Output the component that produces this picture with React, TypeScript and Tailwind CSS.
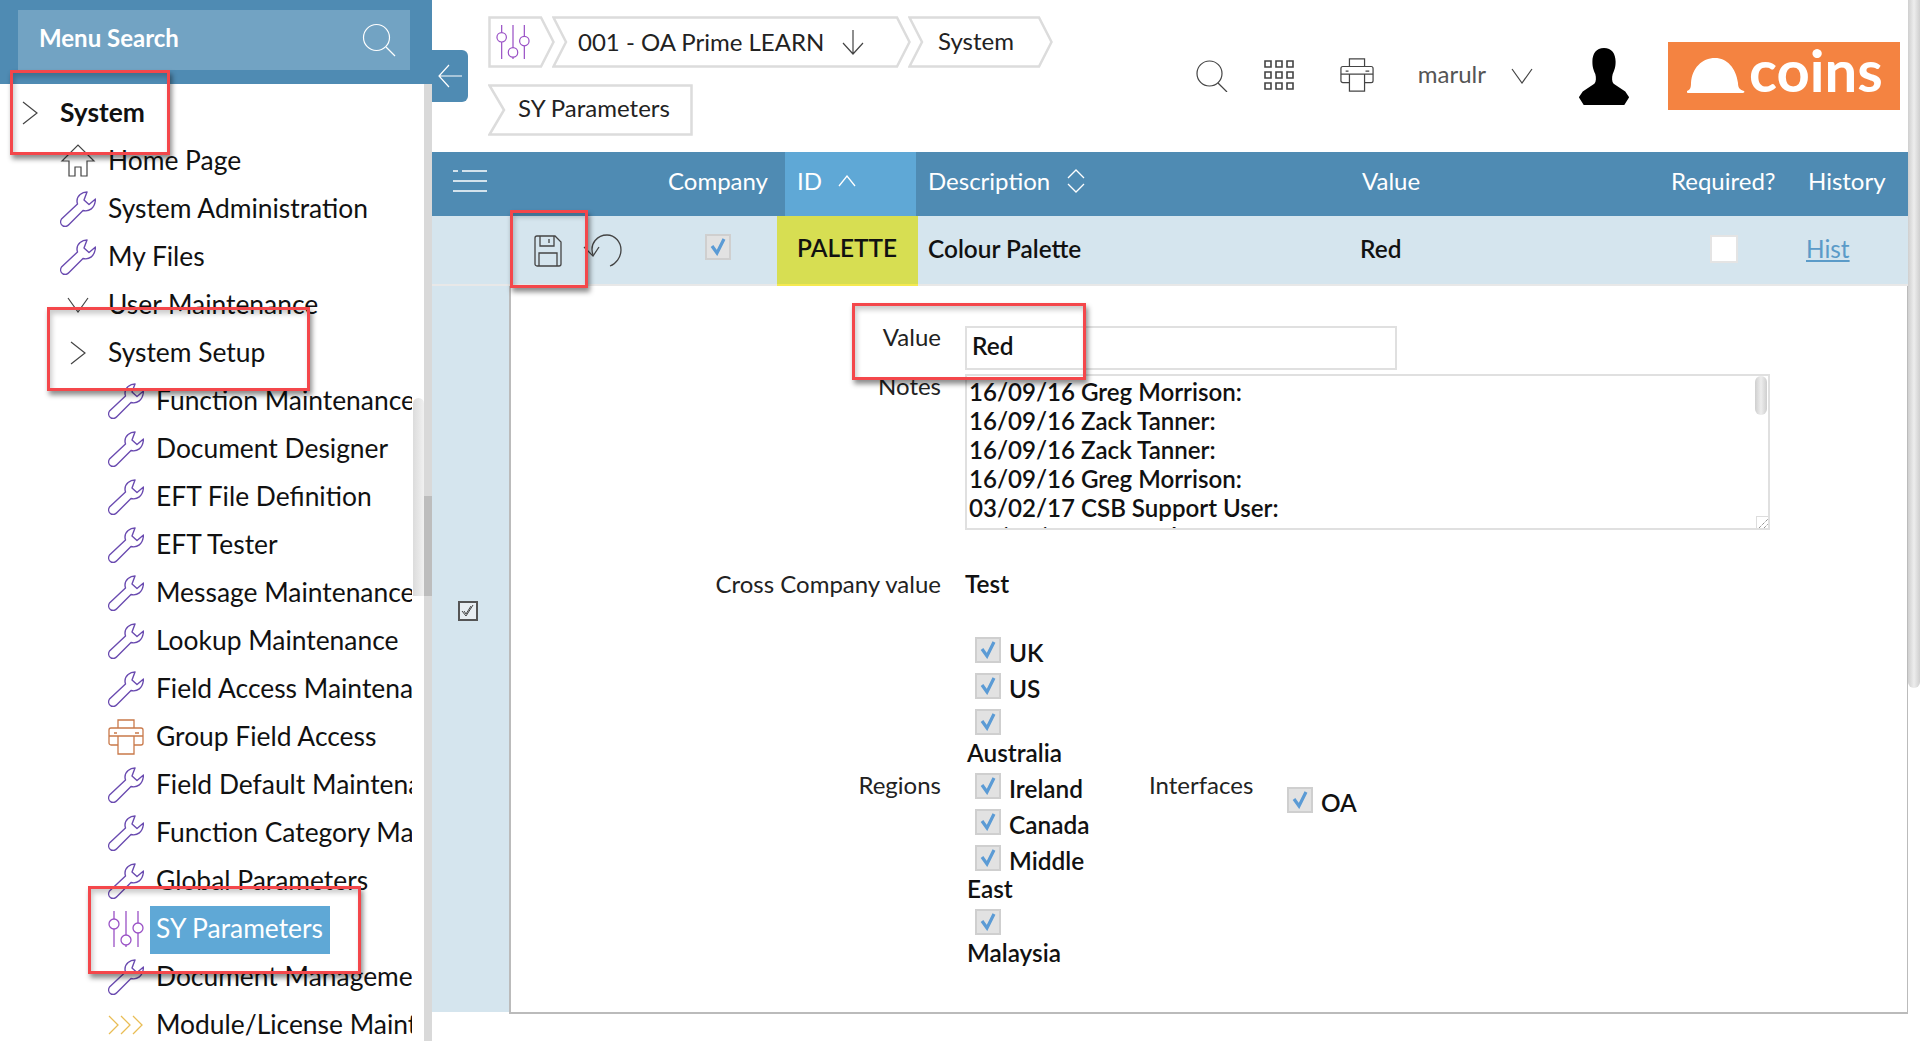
import React from "react";

const Wrench = () => (
  <svg width="36" height="36" viewBox="0 0 36 36" fill="none" stroke="#6a4bb0" strokeWidth="1.4" strokeLinejoin="round" className="shrink-0">
    <path d="M27 1C22 1 17 4.500 17 10c0 1 .2 2 .5 3L1.500 28c-1.500 2.500-1 5.500 1.500 7 2 .8 4.500 .3 6-1.500L23 19.500c6 1.500 12-2 12.500-11.500L29 13.500l-5-4.500z" />
  </svg>
);
const Sliders = ({ s = 36 }: { s?: number }) => (
  <svg width={s} height={s} viewBox="0 0 36 36" fill="none" stroke="#9a52c6" strokeWidth="1.3" className="shrink-0">
    <path d="M6 0v8M6 18v18M18 0v24M18 34v2M30 0v12M30 22v14" />
    <circle cx="6" cy="13" r="5" /><circle cx="18" cy="29" r="5" /><circle cx="30" cy="17" r="5" />
  </svg>
);
const Home = () => (
  <svg width="36" height="36" viewBox="0 0 36 36" fill="none" stroke="#444" strokeWidth="1.2" className="shrink-0">
    <path d="M2 18 18 2l16 16h-7v15h-6v-9h-6v9H9V18z" />
  </svg>
);
const Printer = ({ c, s = 36 }: { c: string; s?: number }) => (
  <svg width={s} height={s} viewBox="0 0 36 36" fill="none" stroke={c} strokeWidth="1.3" className="shrink-0">
    <path d="M10 9V1h16v8M10 26H3a2 2 0 0 1-2-2V11a2 2 0 0 1 2-2h30a2 2 0 0 1 2 2v13a2 2 0 0 1-2 2h-7" />
    <path d="M10 17h16v18H10zM6 14h3M27 14h4M1 17h9M26 17h9" />
  </svg>
);
const ChevR = () => (
  <svg width="16" height="24" viewBox="0 0 16 24" fill="none" stroke="#444" strokeWidth="1.2" className="shrink-0"><path d="M1 1l14 11L1 23" /></svg>
);
const ChevD = ({ w = 22, h = 16 }: { w?: number; h?: number }) => (
  <svg width={w} height={h} viewBox="0 0 22 16" fill="none" stroke="#444" strokeWidth="1.2" className="shrink-0"><path d="M1 1l10 14L21 1" /></svg>
);
const Triple = () => (
  <svg width="36" height="20" viewBox="0 0 36 20" fill="none" stroke="#e9bd55" strokeWidth="1.3" className="shrink-0"><path d="M1 1l9 9-9 9M13 1l9 9-9 9M25 1l9 9-9 9" /></svg>
);

type Item = { t: string; lvl: number; icon: React.ReactNode; bold?: boolean; sel?: boolean };
const items: Item[] = [
  { t: "System", lvl: 0, icon: <ChevR />, bold: true },
  { t: "Home Page", lvl: 1, icon: <Home /> },
  { t: "System Administration", lvl: 1, icon: <Wrench /> },
  { t: "My Files", lvl: 1, icon: <Wrench /> },
  { t: "User Maintenance", lvl: 1, icon: <ChevD /> },
  { t: "System Setup", lvl: 1, icon: <ChevR /> },
  { t: "Function Maintenance", lvl: 2, icon: <Wrench /> },
  { t: "Document Designer", lvl: 2, icon: <Wrench /> },
  { t: "EFT File Definition", lvl: 2, icon: <Wrench /> },
  { t: "EFT Tester", lvl: 2, icon: <Wrench /> },
  { t: "Message Maintenance", lvl: 2, icon: <Wrench /> },
  { t: "Lookup Maintenance", lvl: 2, icon: <Wrench /> },
  { t: "Field Access Maintenance", lvl: 2, icon: <Wrench /> },
  { t: "Group Field Access", lvl: 2, icon: <Printer c="#c9794a" /> },
  { t: "Field Default Maintenance", lvl: 2, icon: <Wrench /> },
  { t: "Function Category Maintenance", lvl: 2, icon: <Wrench /> },
  { t: "Global Parameters", lvl: 2, icon: <Wrench /> },
  { t: "SY Parameters", lvl: 2, icon: <Sliders />, sel: true },
  { t: "Document Management", lvl: 2, icon: <Wrench /> },
  { t: "Module/License Maintenance", lvl: 2, icon: <Triple /> },
];

const MenuRow = ({ it }: { it: Item }) => (
  <div className={`flex h-12 shrink-0 items-center ${it.lvl === 0 ? "pl-3" : it.lvl === 1 ? "pl-[60px]" : "pl-[108px]"}`}>
    <div className="flex w-9 shrink-0 justify-center">{it.icon}</div>
    {it.sel ? (
      <span className="ml-[6px] mt-px flex h-12 items-center bg-[#5fa8d6] pb-[2px] pl-[6px] pr-[7px] text-white">{it.t}</span>
    ) : (
      <span className={it.bold ? "ml-3 font-bold text-[#111]" : "ml-3 text-[#111]"}>{it.t}</span>
    )}
  </div>
);

const RedBox = ({ c }: { c: string }) => (
  <div className={`pointer-events-none absolute border-[3px] border-[#f4474b] shadow-[2px_4px_5px_rgba(0,0,0,0.45),inset_2px_4px_5px_rgba(0,0,0,0.2)] ${c}`} />
);

const Crumb = ({ w, kind, children }: { w: number; kind: "first" | "mid" | "last"; children: React.ReactNode }) => {
  const d =
    kind === "first"
      ? `M1.5 1.5H${w - 14}L${w - 1.5} 26L${w - 14} 50.5H1.5Z`
      : kind === "mid"
        ? `M1.5 1.5H${w - 14}L${w - 1.5} 26L${w - 14} 50.5H1.5L14 26Z`
        : `M1.5 1.5H${w - 1.5}V50.5H1.5L16 26Z`;
  return (
    <div className="relative flex h-[52px] shrink-0 items-center" style={{ width: w }}>
      <svg width={w} height={52} className="absolute left-0 top-0" fill="none" stroke="#dcdcdc" strokeWidth="2.5"><path d={d} /></svg>
      <div className="relative flex items-center">{children}</div>
    </div>
  );
};

const Check = ({ c = "" }: { c?: string }) => (
  <div className={`flex h-[26px] w-[26px] shrink-0 items-center justify-center border-2 border-[#cfcfcf] bg-[#e2e2e2] ${c}`}>
    <svg width="18" height="18" viewBox="0 0 18 18" fill="none" stroke="#5b9bd5" strokeWidth="3.2"><path d="M3 8l5 7 7-14" /></svg>
  </div>
);

const Region = ({ t }: { t: string }) => (
  <div className="flex h-9 items-center pl-[10px]">
    <Check c="-translate-y-[3px]" />
    {t && <span className="ml-2">{t}</span>}
  </div>
);

export default function App() {
  return (
    <div className="relative flex h-[1041px] w-[1920px] overflow-hidden bg-white text-[24px] text-[#111] [font-family:Lato,sans-serif]">
      {/* sidebar */}
      <aside className="relative flex h-full w-[432px] shrink-0 flex-col">
        <div className="flex h-[84px] shrink-0 items-start bg-[#4f8bb3] pl-[18px] pr-[22px] pt-[10px]">
          <div className="flex h-[60px] w-full items-center justify-between bg-[#72a3c3] pl-[21px] pr-[14px] font-bold text-white">
            <span className="-translate-y-[2px]">Menu Search</span>
            <svg width="34" height="34" viewBox="0 0 34 34" fill="none" stroke="#fff" strokeWidth="1.2"><circle cx="14.5" cy="14.5" r="13" /><path d="M24 24l9 9" /></svg>
          </div>
        </div>
        <div className="flex min-h-0 flex-1">
          <div className="h-full w-[412px] overflow-hidden whitespace-nowrap pt-[5px] text-[26.4px]">
            {items.map((it) => <MenuRow key={it.t} it={it} />)}
          </div>
          <div className="w-3" />
          <div className="h-full w-2 bg-[#d9d9d9]" />
        </div>
        <div className="absolute left-[413px] top-[398px] h-[198px] w-[11px] rounded-t-full bg-gradient-to-r from-[#dcdcdc] to-[#f1f1f1]" />
        <div className="absolute left-[424px] top-[496px] h-[100px] w-2 bg-[#bdbdbd]" />
      </aside>

      {/* collapse */}
      <div className="absolute left-[432px] top-[50px] flex h-[52px] w-9 items-center justify-center rounded-r-md bg-[#4f8bb3]">
        <svg width="26" height="24" viewBox="0 0 26 24" fill="none" stroke="#fff" strokeWidth="1.2"><path d="M25 12H2M12 1 2 12l10 11" /></svg>
      </div>

      {/* main */}
      <main className="flex h-full min-w-0 flex-1 flex-col">
        <div className="flex h-[152px] shrink-0 justify-between">
          <div className="flex flex-col gap-4 pl-[56px] pt-4">
            <div className="flex">
              <Crumb w={67} kind="first"><span className="ml-[8px]"><Sliders s={34} /></span></Crumb>
              <div className="-ml-[3px]">
                <Crumb w={359} kind="mid">
                  <span className="ml-[26px] text-[#222]">001 - OA Prime LEARN</span>
                  <svg className="ml-[18px]" width="22" height="26" viewBox="0 0 22 26" fill="none" stroke="#444" strokeWidth="1.2"><path d="M11 1v24M1 14l10 11 10-11" /></svg>
                </Crumb>
              </div>
              <div className="-ml-[3px]">
                <Crumb w={145} kind="mid"><span className="ml-[30px] -translate-y-px text-[#222]">System</span></Crumb>
              </div>
            </div>
            <Crumb w={205} kind="last"><span className="ml-[30px] -translate-y-[2px] text-[#222]">SY Parameters</span></Crumb>
          </div>
          <div className="flex items-start pr-[20px] pt-[42px]">
            <div className="flex h-[68px] items-center">
              <svg width="32" height="32" viewBox="0 0 32 32" fill="none" stroke="#444" strokeWidth="1.2"><circle cx="13.5" cy="13.5" r="12.5" /><path d="M22 23l9 9" /></svg>
              <svg className="ml-[35px] -translate-y-px" width="32" height="32" viewBox="0 0 32 32" fill="none" stroke="#444" strokeWidth="1.6">
                <path d="M2 2h6v6H2zM13 2h6v6h-6zM24 2h6v6h-6zM2 13h6v6H2zM13 13h6v6h-6zM24 13h6v6h-6zM2 24h6v6H2zM13 24h6v6h-6zM24 24h6v6h-6z" />
              </svg>
              <span className="ml-[45px] -translate-y-px"><Printer c="#444" s={34} /></span>
              <span className="ml-[44px] -translate-y-[2px] text-[#555]">marulr</span>
              <span className="ml-[25px]"><ChevD /></span>
              <svg className="ml-[45px] translate-y-px" width="52" height="58" viewBox="0 0 52 60" fill="#000">
                <path d="M26 0c8 0 12 6 12 14 0 6-1 8-3 13-1 4-1 8 1 10l12 8 4 6-5 8H5l-5-8 4-6 12-8c2-2 2-6 1-10-2-5-3-7-3-13C14 6 18 0 26 0z" />
              </svg>
              <div className="ml-[38px] flex h-[68px] w-[232px] items-center bg-[#f48341] pl-[19px]">
                <svg className="-translate-y-px" width="58" height="36" viewBox="0 0 58 36" fill="#fff"><path d="M0 34c3-1 4-3 4-8C5 11 15 1 28 1c12 0 21 10 23 25 0 5 2 7 6 8 1 1 0 2-1 2H2c-2 0-3-1-2-2z" /></svg>
                <span className="ml-[4px] -translate-y-[6px] text-[58px] font-bold leading-none text-white">coins</span>
              </div>
            </div>
          </div>
        </div>

        <div className="mr-3 grid h-16 shrink-0 grid-cols-[236px_117px_131px_434px_300px_145px_113px] items-center bg-[#4f8bb3] text-white">
          <div className="-translate-y-[3px] pl-[21px]">
            <svg width="34" height="22" viewBox="0 0 34 22" fill="none" stroke="#fff" strokeWidth="1.5"><path d="M0 1h5M9 1h25M0 11h34M0 21h34" /></svg>
          </div>
          <div className="-translate-y-[3px] text-right"><span className="mr-[18px]">Company</span></div>
          <div className="flex h-16 items-center bg-[#5fa8d6] pb-[6px] pl-3">
            ID
            <svg className="ml-4" width="18" height="12" viewBox="0 0 18 12" fill="none" stroke="#fff" strokeWidth="1.3"><path d="M1 11l8-10 8 10" /></svg>
          </div>
          <div className="flex -translate-y-[3px] items-center pl-3">
            Description
            <svg className="ml-[17px]" width="18" height="24" viewBox="0 0 18 24" fill="none" stroke="#fff" strokeWidth="1.3"><path d="M1 9l8-8 8 8M1 15l8 8 8-8" /></svg>
          </div>
          <div className="-translate-y-[3px] pl-3">Value</div>
          <div className="-translate-y-[3px] pl-[21px]">Required?</div>
          <div className="-translate-y-[3px] pl-[13px]">History</div>
        </div>

        <div className="mr-3 grid h-[70px] shrink-0 grid-cols-[236px_117px_131px_434px_300px_145px_113px] items-center border-b-2 border-[#e8e8e8] bg-[#d5e5ee] text-[24.4px] font-semibold">
          <div className="flex h-full items-center pl-[102px]">
            <svg width="28" height="32" viewBox="0 0 28 32" fill="none" stroke="#444" strokeWidth="1.3">
              <path d="M1 3a2 2 0 0 1 2-2h18l6 6v22a2 2 0 0 1-2 2H3a2 2 0 0 1-2-2z" />
              <path d="M6 1v10h14V1M5 31V18h18v13M15 4v4" />
            </svg>
            <svg className="ml-[21px]" width="40" height="34" viewBox="0 0 40 34" fill="none" stroke="#444" strokeWidth="1.3">
              <path d="M10 21C6 9 15 1 24 1c8 0 14 7 14 15 0 7-5 14-11 16" /><path d="M1 13l9 9 6-9" />
            </svg>
          </div>
          <div className="flex h-full items-center pl-[37px]"><Check c="-translate-y-[4px]" /></div>
          <div className="-ml-2 -mr-[2px] flex h-[70px] items-center self-start border-b-2 border-[#f5e94f] bg-[#d7de52] pb-[4px] pl-5">PALETTE</div>
          <div className="-translate-y-[2px] pl-3">Colour Palette</div>
          <div className="-translate-y-[2px] pl-[10px]">Red</div>
          <div className="flex justify-center pl-[3px]"><div className="h-7 w-7 -translate-y-[2px] border-2 border-[#e4e4e4] bg-white" /></div>
          <div className="-translate-y-[2px] pl-[11px] font-normal text-[#5b9bc8] underline">Hist</div>
        </div>

        <div className="mr-3 flex h-[728px] shrink-0">
          <div className="flex h-[726px] w-[77px] shrink-0 items-start bg-[#d5e5ee] pl-[26px] pt-[315px]">
            <div className="flex h-5 w-5 items-center justify-center border-2 border-[#555] bg-[#e8eef2]">
              <svg width="14" height="14" viewBox="0 0 14 14" fill="none" stroke="#444" strokeWidth="1"><path d="M1 7l4 5 7-11M3 7l2 3 5-8" /></svg>
            </div>
          </div>
          <div className="flex min-w-0 flex-1 flex-col border-b-2 border-l-2 border-r border-[#bbb] pt-10">
            <div className="flex">
              <div className="-mt-[4px] w-[430px] text-right leading-[29px] text-[#222]">Value</div>
              <div className="ml-6 flex h-11 w-[432px] items-center border-2 border-[#e0e0e0] pb-[3px] pl-[5px] text-[24.4px] font-semibold">Red</div>
            </div>
            <div className="mt-1 flex">
              <div className="-mt-[3px] w-[430px] text-right leading-[29px] text-[#222]">Notes</div>
              <div className="relative ml-6 h-[156px] w-[805px] overflow-hidden border-2 border-[#e0e0e0] pl-[2px] pt-px text-[24.1px] font-semibold leading-[29px]">
                <div>16/09/16 Greg Morrison:</div>
                <div>16/09/16 Zack Tanner:</div>
                <div>16/09/16 Zack Tanner:</div>
                <div>16/09/16 Greg Morrison:</div>
                <div>03/02/17 CSB Support User:</div>
                <div>17/11/17 Kerry Ashcroft:</div>
                <div className="absolute right-[1px] top-0 h-[39px] w-3 rounded-full bg-gradient-to-r from-[#cfcfcf] via-[#ededed] to-[#cfcfcf]" />
                <div className="absolute bottom-0 right-0 flex h-3 w-3 items-end justify-end border-l border-t border-[#ddd] bg-white">
                  <svg width="9" height="9" viewBox="0 0 9 9" stroke="#666" strokeWidth="1" strokeDasharray="1 1"><path d="M0 9l9-9M5 9l4-4" /></svg>
                </div>
              </div>
            </div>
            <div className="mt-[39px] flex">
              <div className="w-[430px] text-right leading-[29px] text-[#222]">Cross Company value</div>
              <div className="ml-6 text-[24.4px] font-semibold leading-[29px]">Test</div>
            </div>
            <div className="mt-[37px] flex items-center">
              <div className="mb-[32px] w-[430px] text-right leading-[29px] text-[#222]">Regions</div>
              <div className="ml-6 w-[164px] text-[24.4px] font-semibold leading-[22px]">
                <Region t="UK" />
                <Region t="US" />
                <Region t="" />
                <div className="mb-[6px] -translate-y-px pl-[2px]">Australia</div>
                <Region t="Ireland" />
                <Region t="Canada" />
                <Region t="Middle" />
                <div className="mb-2 pl-[2px] leading-5">East</div>
                <Region t="" />
                <div className="-translate-y-px pl-[2px]">Malaysia</div>
              </div>
              <div className="mb-[32px] ml-5 w-[104px] leading-[29px] text-[#222]">Interfaces</div>
              <div className="ml-[34px] mt-[7px] flex items-center text-[24.4px] font-semibold">
                <Check c="-translate-y-[3px]" />
                <span className="ml-2">OA</span>
              </div>
            </div>
          </div>
        </div>
      </main>

      {/* page scrollbar */}
      <div className="absolute right-0 top-0 h-[688px] w-3 rounded-b-full bg-gradient-to-r from-[#cfcfcf] via-[#ededed] to-[#cfcfcf]" />

      {/* annotation boxes */}
      <RedBox c="left-[10px] top-[70px] h-[85px] w-[160px]" />
      <RedBox c="left-[47px] top-[307px] h-[84px] w-[263px]" />
      <RedBox c="left-[88px] top-[886px] h-[88px] w-[273px]" />
      <RedBox c="left-[510px] top-[210px] h-[78px] w-[78px]" />
      <RedBox c="left-[852px] top-[303px] h-[77px] w-[234px]" />
    </div>
  );
}
